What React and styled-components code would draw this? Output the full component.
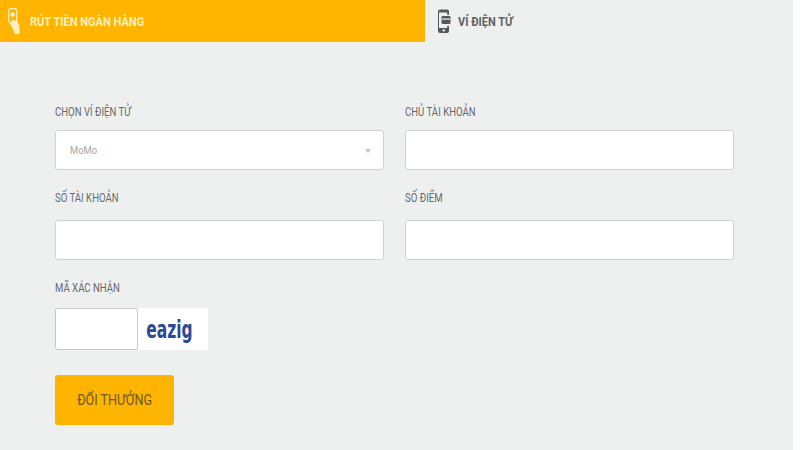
import React from "react";
import styled, { createGlobalStyle } from "styled-components";

const Global = createGlobalStyle`
  html, body { margin: 0; padding: 0; background: #fff; }
  body { font-family: Roboto, "Liberation Sans", sans-serif; }
  * { box-sizing: border-box; }
`;

const Page = styled.div`
  width: 793px;
  height: 450px;
  background: #eef0f0;
  overflow: hidden;
`;
const Tabs = styled.div`
  display: flex;
  height: 42px;
`;
const Tab = styled.div`
  width: ${(p) => (p.$active ? "425px" : "auto")};
  height: 42px;
  display: flex;
  align-items: center;
  gap: ${(p) => (p.$active ? "10px" : "7px")};
  padding-left: ${(p) => (p.$active ? "8px" : "12px")};
  background: ${(p) => (p.$active ? "#ffb400" : "transparent")};
  color: ${(p) => (p.$active ? "#fdf0c0" : "#5f6264")};
`;
const TabText = styled.span`
  font-size: 13px;
  font-weight: 700;
  white-space: nowrap;
  display: inline-block;
  transform: scaleX(0.85);
  transform-origin: left center;
`;
const Form = styled.div`
  padding: 58px 0 0 55px;
  display: flex;
  flex-direction: column;
`;
const Row = styled.div`
  display: grid;
  grid-template-columns: 329px 329px;
  column-gap: 21px;
  margin-bottom: 16px;
`;
const Field = styled.div`
  display: flex;
  flex-direction: column;
`;
const Label = styled.label`
  font-size: 12px;
  line-height: 24px;
  height: 24px;
  margin-bottom: ${(p) => p.$gap}px;
  color: #66696b;
  white-space: nowrap;
  transform: scaleX(0.8);
  transform-origin: left center;
`;
const Input = styled.div`
  height: 40px;
  background: #fff;
  border: 1px solid #d0d2d3;
  border-radius: 3px;
`;
const SelectBox = styled(Input)`
  display: flex;
  align-items: center;
  justify-content: space-between;
  padding: 0 12px 0 14px;
  font-size: 11px;
  color: #a6a7a7;
`;
const SelectValue = styled.span`
  display: inline-block;
  transform: scaleX(0.85);
  transform-origin: left center;
`;
const Caret = styled.span`
  width: 0;
  height: 0;
  border-left: 3px solid transparent;
  border-right: 3px solid transparent;
  border-top: 4px solid #c2c4c5;
  margin-top: 2px;
`;
const CaptchaRow = styled.div`
  display: flex;
  align-items: stretch;
  height: 42px;
`;
const CaptchaInput = styled(Input)`
  width: 83px;
  height: 42px;
  border-color: #c6c8c9;
`;
const CaptchaImage = styled.div`
  width: 70px;
  background: #fff;
  display: flex;
  align-items: center;
  justify-content: center;
  padding-right: 7px;
  font-family: "DejaVu Sans", sans-serif;
  font-size: 25px;
  font-weight: 700;
  color: #2c4a96;
`;
const CaptchaText = styled.span`
  display: inline-block;
  transform: scaleX(0.62);
`;
const Submit = styled.button`
  width: 119px;
  height: 50px;
  margin-top: 25px;
  border: none;
  border-radius: 3px;
  background: #ffb400;
  color: #6f5824;
  font-family: Roboto, "Liberation Sans", sans-serif;
  font-size: 15px;
  font-weight: 400;
  padding: 0;
`;
const SubmitText = styled.span`
  display: inline-block;
  transform: scaleX(0.84);
  white-space: nowrap;
`;

const HandIcon = () => (
  <svg width="12" height="26" viewBox="0 0 12 26" fill="none">
    <rect x="0.7" y="0.7" width="8" height="14" rx="2" stroke="#fdf0c0" strokeWidth="1.3" />
    <circle cx="4.700" cy="6.500" r="2.300" fill="#fdf0c0" />
    <path d="M5 11.500 L9 13.500 L11.500 17.500 L11.500 26 L6.500 26 L5 21 L2 16 Z" fill="#fdf0c0" />
  </svg>
);

const PhoneIcon = () => (
  <svg width="14" height="24" viewBox="0 0 14 24" fill="none">
    <path d="M3 .5h7a2 2 0 0 1 2 2V6h-1.800V3.500H2V19h8.200v-2H12v5a2 2 0 0 1-2 2H3a2 2 0 0 1-2-2V2.500a2 2 0 0 1 2-2Z" fill="#55585a" />
    <rect x="4.500" y="7" width="9" height="8" rx="1.200" fill="#55585a" />
    <rect x="5" y="9.500" width="8" height="1.200" fill="#eef0f0" />
    <rect x="5.500" y="20.500" width="2.500" height="1.800" fill="#eef0f0" />
  </svg>
);

export default function App() {
  return (
    <Page>
      <Global />
      <Tabs>
        <Tab $active>
          <HandIcon />
          <TabText>RÚT TIỀN NGÂN HÀNG</TabText>
        </Tab>
        <Tab>
          <PhoneIcon />
          <TabText>VÍ ĐIỆN TỬ</TabText>
        </Tab>
      </Tabs>
      <Form>
        <Row>
          <Field>
            <Label $gap={6}>CHỌN VÍ ĐIỆN TỬ</Label>
            <SelectBox>
              <SelectValue>MoMo</SelectValue>
              <Caret />
            </SelectBox>
          </Field>
          <Field>
            <Label $gap={6}>CHỦ TÀI KHOẢN</Label>
            <Input />
          </Field>
        </Row>
        <Row>
          <Field>
            <Label $gap={10}>SỐ TÀI KHOẢN</Label>
            <Input />
          </Field>
          <Field>
            <Label $gap={10}>SỐ ĐIỂM</Label>
            <Input />
          </Field>
        </Row>
        <Field>
          <Label $gap={8}>MÃ XÁC NHẬN</Label>
          <CaptchaRow>
            <CaptchaInput />
            <CaptchaImage>
              <CaptchaText>eazig</CaptchaText>
            </CaptchaImage>
          </CaptchaRow>
        </Field>
        <Submit>
          <SubmitText>ĐỔI THƯỞNG</SubmitText>
        </Submit>
      </Form>
    </Page>
  );
}
